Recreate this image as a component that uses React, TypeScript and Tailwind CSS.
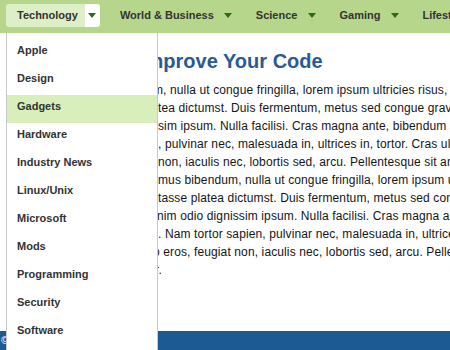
import { ReactNode } from "react";

const navItems = ["Technology", "World & Business", "Science", "Gaming", "Lifestyle"];

const categories = [
  "Apple",
  "Design",
  "Gadgets",
  "Hardware",
  "Industry News",
  "Linux/Unix",
  "Microsoft",
  "Mods",
  "Programming",
  "Security",
  "Software",
];

// visible part of each wrapped line (the start sits under the open menu)
const lines: { text: string; shift: string }[] = [
  { text: "m, nulla ut congue fringilla, lorem ipsum ultricies risus, ut rutrum", shift: "-ml-[5px]" },
  { text: "tea dictumst. Duis fermentum, metus sed congue gravida, arcu", shift: "ml-0" },
  { text: "sim ipsum. Nulla facilisi. Cras magna ante, bibendum sit amet", shift: "ml-0" },
  { text: ", pulvinar nec, malesuada in, ultrices in, tortor. Cras ultricies", shift: "ml-0" },
  { text: "non, iaculis nec, lobortis sed, arcu. Pellentesque sit amet sem", shift: "ml-0" },
  { text: "mus bibendum, nulla ut congue fringilla, lorem ipsum ultricies", shift: "ml-0" },
  { text: "tasse platea dictumst. Duis fermentum, metus sed congue gravida", shift: "ml-0" },
  { text: "nim odio dignissim ipsum. Nulla facilisi. Cras magna ante, porta", shift: "-ml-[1px]" },
  { text: ". Nam tortor sapien, pulvinar nec, malesuada in, ultrices in", shift: "ml-0" },
  { text: "o eros, feugiat non, iaculis nec, lobortis sed, arcu. Pellentesque", shift: "-ml-[5px]" },
  { text: "r.", shift: "-ml-[3px]" },
];

function Caret() {
  return (
    <svg width="8" height="5" viewBox="0 0 8 5">
      <polygon points="0,0 8,0 4,5" fill="#2f6a17" />
    </svg>
  );
}

function NavItem({ label, active }: { label: string; active?: boolean }): ReactNode {
  return (
    <div className="flex h-[23px]">
      <span
        className={`flex items-center rounded-l-[3px] pl-[11px] pr-[7px] text-[11px] font-bold text-[#333] ${
          active ? "bg-[#ddefc6]" : ""
        }`}
      >
        {label}
      </span>
      <span
        className={`flex w-[15px] items-center justify-center rounded-r-[3px] ${active ? "bg-white" : ""}`}
      >
        <Caret />
      </span>
    </div>
  );
}

export default function App() {
  return (
    <div
      className="relative h-[350px] w-[450px] overflow-hidden bg-white"
      style={{ fontFamily: '"Liberation Sans", Arial, Helvetica, sans-serif' }}
    >
      <nav className="flex h-[33px] items-start gap-[9px] whitespace-nowrap bg-[#b6d68b] pl-[6px] pt-[4px]">
        {navItems.map((item, i) => (
          <NavItem key={item} label={item} active={i === 0} />
        ))}
      </nav>

      <main className="pl-[158px] pt-[16px]">
        <h1 className="-ml-[18px] whitespace-nowrap text-[20px] font-bold leading-[24px] text-[#2b5995]">
          Improve Your Code
        </h1>
        <div className="mt-[8px] text-[12px] leading-[18px] tracking-[0.12px] text-[#151515]">
          {lines.map((line, i) => (
            <div key={i} className={`whitespace-nowrap ${line.shift}`}>
              {line.text}
            </div>
          ))}
        </div>
      </main>

      <footer className="mt-[52px] flex h-[19px] items-center bg-[#1c5a92] pl-[1px] text-[11px] text-white">
        ©
      </footer>

      {/* open Technology menu */}
      <ul className="absolute left-[6px] top-[33px] z-10 h-[330px] w-[152px] border-x border-[#c9c9c9] bg-white pt-[6px]">
        {categories.map((cat) => (
          <li
            key={cat}
            className={`h-[28px] pl-[10px] pt-[4px] text-[11px] font-bold leading-[14px] text-[#333] ${
              cat === "Gadgets" ? "bg-[#d8efbb]" : ""
            }`}
          >
            {cat}
          </li>
        ))}
      </ul>
    </div>
  );
}
